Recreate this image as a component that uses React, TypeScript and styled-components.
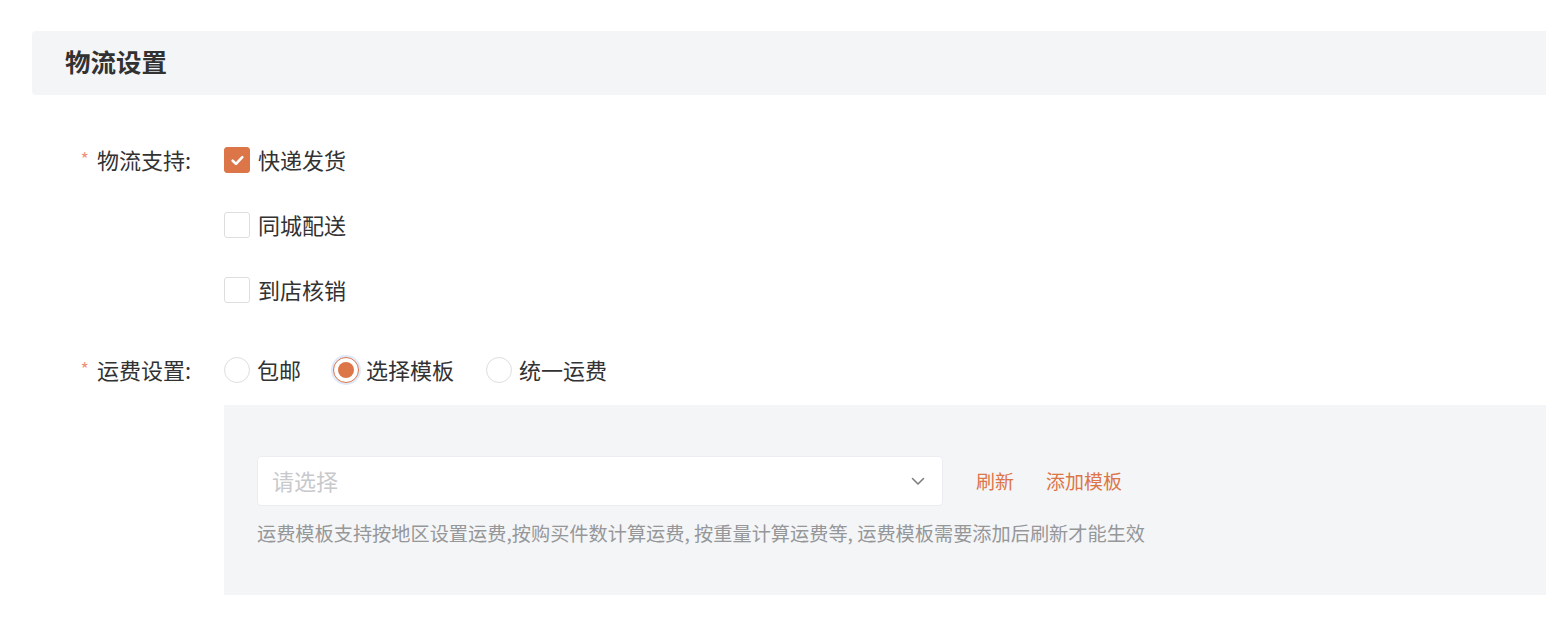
import React, { useState } from 'react';
import styled, { createGlobalStyle } from 'styled-components';

const ORANGE = '#dc7548';

const GlobalStyle = createGlobalStyle`
  body {
    margin: 0;
    background: #fff;
    font-family: "Noto Sans CJK SC", "Noto Sans", sans-serif;
    color: #323233;
  }
`;

const Page = styled.div`
  padding: 31px 0 0 32px;
`;

const Header = styled.div`
  height: 64px;
  box-sizing: border-box;
  display: flex;
  align-items: center;
  padding: 0 0 4px 33px;
  background: #f4f5f7;
  border-radius: 4px 0 0 4px;
`;

const Title = styled.h2`
  margin: 0;
  font-size: 25.5px;
  line-height: 1;
  font-weight: 700;
  color: #323233;
`;

const Form = styled.div`
  display: flex;
  flex-direction: column;
  gap: 54px;
  padding-top: 52px;
`;

const FormItem = styled.div`
  display: flex;
  align-items: flex-start;
`;

const Label = styled.div`
  width: 192px;
  height: 26px;
  flex-shrink: 0;
  display: flex;
  align-items: center;
  justify-content: flex-end;
  padding-right: 33px;
  box-sizing: border-box;
  font-size: 22px;
  color: #323233;
`;

const Required = styled.span`
  color: #f0937a;
  font-size: 18px;
  margin-right: 8px;
  align-self: flex-start;
  line-height: 22px;
`;

/* Noto CJK sits a little low in its line box; lift it to the control's centre */
const Text = styled.span`
  line-height: 26px;
  margin-top: -3px;
`;

const Content = styled.div`
  flex: 1;
  display: flex;
  flex-direction: column;
`;

const CheckGroup = styled.div`
  display: flex;
  flex-direction: column;
  gap: 39px;
`;

const Option = styled.label`
  display: flex;
  align-items: center;
  height: 26px;
  font-size: 22px;
  color: #323233;
  cursor: pointer;
`;

const Box = styled.span<{ $checked: boolean }>`
  width: 26px;
  height: 26px;
  box-sizing: border-box;
  border-radius: 3px;
  border: 1px solid ${(p) => (p.$checked ? ORANGE : '#dcdee0')};
  background: ${(p) => (p.$checked ? ORANGE : '#fff')};
  display: flex;
  align-items: center;
  justify-content: center;
  margin-right: 8px;
`;

const RadioGroup = styled.div`
  display: flex;
  align-items: center;
  gap: 32px;
`;

const Circle = styled.span<{ $checked: boolean }>`
  width: 26px;
  height: 26px;
  box-sizing: border-box;
  border-radius: 50%;
  border: 1px solid ${(p) => (p.$checked ? ORANGE : '#dcdee0')};
  background: #fff;
  display: flex;
  align-items: center;
  justify-content: center;
  margin-right: 7px;
  box-shadow: ${(p) => (p.$checked ? '0 0 0 2px #dfe9f9' : 'none')};

  &::after {
    content: '';
    display: ${(p) => (p.$checked ? 'block' : 'none')};
    width: 16px;
    height: 16px;
    border-radius: 50%;
    background: ${ORANGE};
  }
`;

const Panel = styled.div`
  margin-top: 22px;
  height: 190px;
  box-sizing: border-box;
  padding: 51px 0 0 33px;
  background: #f4f5f7;
`;

const SelectRow = styled.div`
  display: flex;
  align-items: center;
  gap: 33px;
`;

const Select = styled.div`
  width: 686px;
  height: 50px;
  box-sizing: border-box;
  display: flex;
  align-items: center;
  justify-content: space-between;
  padding: 0 16px 0 14px;
  background: #fff;
  border: 1px solid #ebedf0;
  border-radius: 4px;
`;

const Placeholder = styled.span`
  font-size: 22px;
  color: #c8c9cc;
  margin-top: -2px;
`;

const LinkButton = styled.button`
  border: none;
  background: none;
  padding: 0;
  font-family: inherit;
  font-size: 19px;
  color: ${ORANGE};
  cursor: pointer;
`;

const Links = styled.div`
  display: flex;
  gap: 32px;
  margin-top: -2px;
`;

const Hint = styled.p`
  margin: 13px 0 0;
  font-size: 19.2px;
  color: #969799;
  line-height: 28px;
`;

const Check = () => (
  <svg width="15" height="15" viewBox="0 0 14 14" fill="none">
    <path d="M2.5 7.2 L5.6 10.2 L11.5 3.8" stroke="#fff" strokeWidth="2.4" strokeLinecap="round" strokeLinejoin="round" />
  </svg>
);

const Chevron = () => (
  <svg width="16" height="16" viewBox="0 0 16 16" fill="none">
    <path d="M2.5 5.5 L8 11 L13.5 5.5" stroke="#7d7e80" strokeWidth="1.6" strokeLinecap="round" strokeLinejoin="round" />
  </svg>
);

const deliveries = ['快递发货', '同城配送', '到店核销'];
const freights = ['包邮', '选择模板', '统一运费'];

const App = () => {
  const [delivery, setDelivery] = useState<string[]>(['快递发货']);
  const [freight, setFreight] = useState('选择模板');

  const toggle = (name: string) =>
    setDelivery((d) => (d.includes(name) ? d.filter((x) => x !== name) : [...d, name]));

  return (
    <>
      <GlobalStyle />
      <Page>
        <Header>
          <Title>物流设置</Title>
        </Header>
        <Form>
          <FormItem>
            <Label>
              <Required>*</Required>
              <Text>物流支持:</Text>
            </Label>
            <Content>
              <CheckGroup>
                {deliveries.map((name) => {
                  const checked = delivery.includes(name);
                  return (
                    <Option key={name} onClick={() => toggle(name)}>
                      <Box $checked={checked}>{checked && <Check />}</Box>
                      <Text>{name}</Text>
                    </Option>
                  );
                })}
              </CheckGroup>
            </Content>
          </FormItem>
          <FormItem>
            <Label>
              <Required>*</Required>
              <Text>运费设置:</Text>
            </Label>
            <Content>
              <RadioGroup>
                {freights.map((name) => (
                  <Option key={name} onClick={() => setFreight(name)}>
                    <Circle $checked={freight === name} />
                    <Text>{name}</Text>
                  </Option>
                ))}
              </RadioGroup>
              <Panel>
                <SelectRow>
                  <Select>
                    <Placeholder>请选择</Placeholder>
                    <Chevron />
                  </Select>
                  <Links>
                    <LinkButton>刷新</LinkButton>
                    <LinkButton>添加模板</LinkButton>
                  </Links>
                </SelectRow>
                <Hint>
                  运费模板支持按地区设置运费,按购买件数计算运费, 按重量计算运费等, 运费模板需要添加后刷新才能生效
                </Hint>
              </Panel>
            </Content>
          </FormItem>
        </Form>
      </Page>
    </>
  );
};

export default App;
